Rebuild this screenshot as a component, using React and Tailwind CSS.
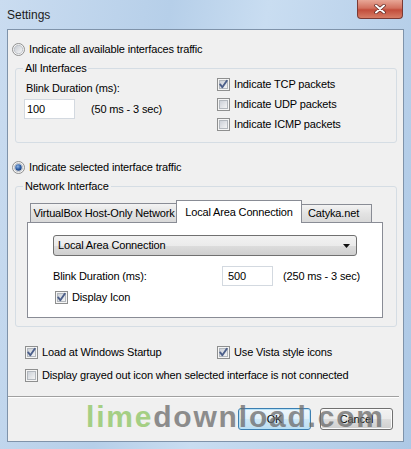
import React from 'react';

const Check = ({ checked }) => (
  <svg width="13" height="13" viewBox="0 0 13 13" className="shrink-0">
    <defs>
      <linearGradient id="cbInner" x1="0" y1="0" x2="1" y2="1">
        <stop offset="0" stopColor="#c9ced6" />
        <stop offset="1" stopColor="#f6f6f6" />
      </linearGradient>
    </defs>
    <rect x="0.5" y="0.5" width="12" height="12" fill="#f5f5f5" stroke="#8e8f8f" />
    <rect x="2.5" y="2.5" width="8" height="8" fill="url(#cbInner)" stroke="#b2b7bd" />
    {checked && (
      <path d="M3.2 6.4 L5.3 9.2 L9.8 2.8" fill="none" stroke="#4c5f8a" strokeWidth="1.9" strokeLinecap="round" strokeLinejoin="round" />
    )}
  </svg>
);

const Radio = ({ checked }) => (
  <svg width="13" height="13" viewBox="0 0 13 13" className="shrink-0">
    <defs>
      <linearGradient id="rbInner" x1="0" y1="0" x2="1" y2="1">
        <stop offset="0" stopColor="#c4c9d0" />
        <stop offset="1" stopColor="#f8f8f8" />
      </linearGradient>
      <radialGradient id="rbDot" cx="0.4" cy="0.35" r="0.7">
        <stop offset="0" stopColor="#8fb6e6" />
        <stop offset="0.6" stopColor="#2d5ea6" />
        <stop offset="1" stopColor="#163a73" />
      </radialGradient>
    </defs>
    <circle cx="6.5" cy="6.5" r="6" fill="#f4f4f4" stroke="#8e8f8f" />
    <circle cx="6.5" cy="6.5" r="4.2" fill="url(#rbInner)" stroke="#b5bac0" strokeWidth="0.8" />
    {checked && <circle cx="6.5" cy="6.5" r="3.2" fill="url(#rbDot)" />}
  </svg>
);

const CheckRow = ({ checked, children, className = '' }) => (
  <div className={`flex items-center gap-[4px] ${className}`}>
    <Check checked={checked} />
    <span className="leading-[13px]">{children}</span>
  </div>
);

export default function App() {
  return (
    <div className="relative w-[411px] h-[449px] overflow-hidden bg-[linear-gradient(100deg,#cadcf0_0%,#b6cfe9_35%,#c9ddf1_55%,#adc8e5_100%)] font-['Liberation_Sans',Arial,sans-serif] text-[11px] tracking-[-0.15px] text-black">
      {/* title bar */}
      <div className="relative h-[29px] flex items-center pl-[7px]">
        <span className="text-[12px] tracking-normal text-[#1b1b1b]">Settings</span>
        <div className="absolute top-0 right-[8px] w-[46px] h-[19px] rounded-b-[4px] border border-t-0 border-[#7a3a34] bg-[linear-gradient(#e8a797_0%,#d2715f_45%,#c24d3b_55%,#d67d66_100%)] flex items-center justify-center">
          <svg width="12" height="10" viewBox="0 0 12 10">
            <path d="M2 1.5 L10 8.5 M10 1.5 L2 8.5" stroke="#5a2420" strokeWidth="3.4" strokeLinecap="round" />
            <path d="M2 1.5 L10 8.5 M10 1.5 L2 8.5" stroke="#ffffff" strokeWidth="2" strokeLinecap="round" />
          </svg>
        </div>
      </div>

      {/* client area */}
      <div className="ml-[7px] w-[397px] h-[413px] border border-[#7f93aa] bg-[#f0f0f0] flex flex-col">
        <div className="mt-[13px] ml-[4px] flex items-center gap-[4px] h-[13px]">
          <Radio />
          <span>Indicate all available interfaces traffic</span>
        </div>

        <fieldset className="mt-[6px] ml-[7px] w-[382px] border border-[#d5dde4] rounded-[3px] pl-[8px] pb-[8px]">
          <legend className="-ml-[1px] px-[2px] leading-[13px]">All Interfaces</legend>
          <div className="flex">
            <div className="w-[193px] flex flex-col">
              <span className="mt-[6px] ml-[2px] leading-[14px]">Blink Duration (ms):</span>
              <div className="mt-[4px] flex items-center">
                <div className="w-[51px] h-[20px] border border-[#d3d9e0] bg-white pl-[2px] flex items-center">100</div>
                <span className="ml-[16px]">(50 ms - 3 sec)</span>
              </div>
            </div>
            <div className="-mt-[1px] flex flex-col">
              <CheckRow checked className="h-[20px]">Indicate TCP packets</CheckRow>
              <CheckRow className="h-[20px]">Indicate UDP packets</CheckRow>
              <CheckRow className="h-[20px]">Indicate ICMP packets</CheckRow>
            </div>
          </div>
        </fieldset>

        <div className="mt-[18px] ml-[4px] flex items-center gap-[4px] h-[13px]">
          <Radio checked />
          <span>Indicate selected interface traffic</span>
        </div>

        <fieldset className="mt-[6px] ml-[7px] w-[382px] border border-[#d5dde4] rounded-[3px] pl-[8px] pb-[8px]">
          <legend className="-ml-[1px] px-[2px] leading-[13px]">Network Interface</legend>
          <div className="ml-[3px] mt-[7px] w-[356px]">
            {/* tabs */}
            <div className="flex items-end h-[22px] pl-[3px]">
              <div className="w-[148px] h-[19px] border border-b-0 border-[#898c95] bg-[linear-gradient(#f3f3f3,#e3e3e3_50%,#d9d9d9)] flex items-center justify-center">
                VirtualBox Host-Only Network
              </div>
              <div className="relative z-10 -ml-[2px] -mb-[1px] w-[126px] h-[23px] border border-b-0 border-[#898c95] bg-white flex items-start justify-center pt-[3px]">
                Local Area Connection
              </div>
              <div className="-ml-[1px] w-[71px] h-[18px] border border-b-0 border-[#898c95] bg-[linear-gradient(#f3f3f3,#e3e3e3_50%,#d9d9d9)] flex items-center pl-[6px]">
                Catyka.net
              </div>
            </div>
            {/* panel */}
            <div className="h-[96px] border border-[#898c95] bg-white pl-[25px] pt-[12px] flex flex-col">
              <div className="w-[304px] h-[21px] rounded-[3px] border border-[#707070] bg-[linear-gradient(#f2f2f2_0%,#ebebeb_50%,#dddddd_51%,#cfcfcf_100%)] flex items-center justify-between pl-[4px] pr-[6px]">
                <span>Local Area Connection</span>
                <svg width="7" height="4" viewBox="0 0 7 4">
                  <path d="M0 0 H7 L3.5 4 Z" fill="#111" />
                </svg>
              </div>
              <div className="mt-[10px] flex items-center h-[20px]">
                <span className="w-[169px]">Blink Duration (ms):</span>
                <div className="w-[51px] h-[20px] border border-[#d3d9e0] bg-white pl-[5px] flex items-center">500</div>
                <span className="ml-[10px]">(250 ms - 3 sec)</span>
              </div>
              <CheckRow checked className="mt-[5px] ml-[2px] h-[13px] gap-[2px]">Display Icon</CheckRow>
            </div>
          </div>
        </fieldset>

        <div className="mt-[19px] ml-[17px] flex h-[13px]">
          <CheckRow checked className="w-[192px] gap-[3px]">Load at Windows Startup</CheckRow>
          <CheckRow checked>Use Vista style icons</CheckRow>
        </div>
        <CheckRow className="mt-[10px] ml-[17px] h-[13px] gap-[3px]">
          Display grayed out icon when selected interface is not connected
        </CheckRow>

        <div className="mt-[14px] w-[391px] border-t border-[#a0a0a0] border-b border-b-white" />

        <div className="mt-[10px] flex justify-end gap-[9px] pr-[10px]">
          <div className="w-[73px] h-[22px] rounded-[3px] border border-[#3c7fb1] bg-[linear-gradient(#eef7fc_0%,#e0f0fa_50%,#cfe8f6_51%,#bcdef2_100%)] shadow-[inset_0_0_0_1px_#b7e2f8] flex items-center justify-center">
            OK
          </div>
          <div className="w-[73px] h-[22px] rounded-[3px] border border-[#707070] bg-[linear-gradient(#f2f2f2_0%,#ebebeb_50%,#dddddd_51%,#cfcfcf_100%)] shadow-[inset_0_0_0_1px_#fcfcfc] flex items-center justify-center">
            Cancel
          </div>
        </div>
      </div>

      {/* watermark */}
      <div className="absolute left-[86px] top-[402px] text-[30px] leading-none font-bold tracking-[1.8px] opacity-75 pointer-events-none whitespace-nowrap">
        <span className="text-[#8cc461]">lime</span>
        <span className="text-[#6b6b6b]">download.com</span>
      </div>
    </div>
  );
}
